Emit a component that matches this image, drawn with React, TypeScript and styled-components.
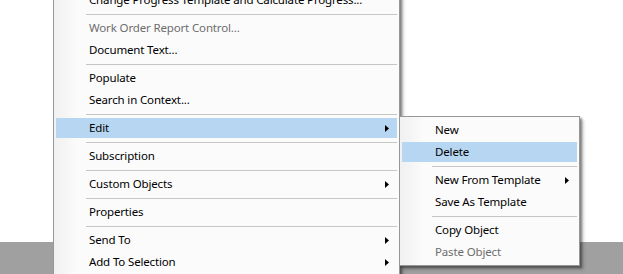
import styled, { createGlobalStyle } from "styled-components";

type Entry =
  | { kind: "sep" }
  | {
      kind: "item";
      label: string;
      disabled?: boolean;
      active?: boolean;
      arrow?: boolean;
      sub?: Entry[];
    };

const subItems: Entry[] = [
  { kind: "item", label: "New" },
  { kind: "item", label: "Delete", active: true },
  { kind: "sep" },
  { kind: "item", label: "New From Template", arrow: true },
  { kind: "item", label: "Save As Template" },
  { kind: "sep" },
  { kind: "item", label: "Copy Object" },
  { kind: "item", label: "Paste Object", disabled: true },
];

const mainItems: Entry[] = [
  { kind: "item", label: "Change Progress Template and Calculate Progress..." },
  { kind: "sep" },
  { kind: "item", label: "Work Order Report Control...", disabled: true },
  { kind: "item", label: "Document Text..." },
  { kind: "sep" },
  { kind: "item", label: "Populate" },
  { kind: "item", label: "Search in Context..." },
  { kind: "sep" },
  { kind: "item", label: "Edit", arrow: true, active: true, sub: subItems },
  { kind: "sep" },
  { kind: "item", label: "Subscription" },
  { kind: "sep" },
  { kind: "item", label: "Custom Objects", arrow: true },
  { kind: "sep" },
  { kind: "item", label: "Properties" },
  { kind: "sep" },
  { kind: "item", label: "Send To", arrow: true },
  { kind: "item", label: "Add To Selection", arrow: true },
];

const GlobalStyle = createGlobalStyle`
  html, body {
    margin: 0;
    padding: 0;
    overflow: hidden;
  }
  body {
    font-family: "Segoe UI", "Noto Sans", "Open Sans", sans-serif;
    font-size: 11.5px;
    letter-spacing: -0.15px;
  }
`;

const Arrow = () => (
  <svg width="4" height="7" viewBox="0 0 4 7">
    <polygon points="0,0 4,3.5 0,7" fill="#000" />
  </svg>
);

const MenuList = ({ items }: { items: Entry[] }) => (
  <>
    {items.map((entry, i) =>
      entry.kind === "sep" ? (
        <Separator key={i} />
      ) : (
        <Item key={i} $active={entry.active} $disabled={entry.disabled}>
          <Label>{entry.label}</Label>
          {entry.arrow && (
            <ArrowSlot>
              <Arrow />
            </ArrowSlot>
          )}
          {entry.sub && (
            <SubMenu>
              <MenuList items={entry.sub} />
            </SubMenu>
          )}
        </Item>
      )
    )}
  </>
);

export default function App() {
  return (
    <>
      <GlobalStyle />
      <Page>
        <Workspace />
        <Footer />
        <MainMenu>
          <MenuList items={mainItems} />
        </MainMenu>
      </Page>
    </>
  );
}

const Page = styled.div`
  position: relative;
  width: 623px;
  height: 274px;
  overflow: hidden;
  display: flex;
  flex-direction: column;
`;

const Workspace = styled.div`
  height: 242px;
  background: #ffffff;
`;

const Footer = styled.div`
  flex: 1;
  background: #a0a0a0;
`;

const menuBase = `
  position: absolute;
  box-sizing: border-box;
  padding: 2px;
  border: 1px solid #979797;
  background-color: #fbfbfb;
  background-image: linear-gradient(
    to right,
    #f1f1f1 0px,
    #f4f4f4 8px,
    #fbfbfb 24px
  );
  box-shadow: 2px 2px 2px rgba(0, 0, 0, 0.4), 4px 4px 3px rgba(0, 0, 0, 0.15);
  color: #000;
`;

const MainMenu = styled.div`
  ${menuBase}
  left: 53px;
  top: -14px;
  width: 347px;
`;

const SubMenu = styled.div`
  ${menuBase}
  left: 343px;
  top: -1px;
  width: 181px;
  z-index: 2;
`;

const Item = styled.div<{ $active?: boolean; $disabled?: boolean }>`
  position: relative;
  height: 22px;
  display: flex;
  align-items: center;
  padding: 0 8px 0 33px;
  color: ${(p) => (p.$disabled ? "#6d6d6d" : "#000")};

  &::before {
    content: "";
    position: absolute;
    left: 0;
    right: 0;
    top: 1px;
    bottom: 1px;
    background: ${(p) => (p.$active ? "#b6d6f2" : "transparent")};
  }
`;

const Label = styled.span`
  position: relative;
  flex: 1;
  white-space: nowrap;
  line-height: 22px;
`;

const ArrowSlot = styled.span`
  position: relative;
  display: flex;
  align-items: center;
`;

const Separator = styled.div`
  height: 6px;
  display: flex;
  align-items: center;
  padding-left: 30px;

  &::after {
    content: "";
    flex: 1;
    height: 1px;
    background: #c6c6c6;
  }
`;
